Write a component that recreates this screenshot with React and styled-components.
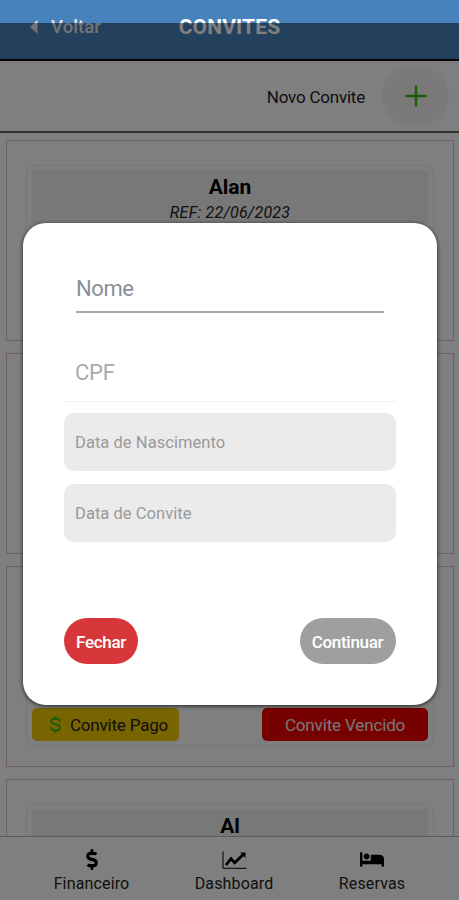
import React from "react";
import styled, { createGlobalStyle } from "styled-components";
import { FaBed, FaDollarSign } from "react-icons/fa";

const GlobalStyle = createGlobalStyle`
  * { box-sizing: border-box; }
  body { margin: 0; overflow: hidden; font-family: Roboto, sans-serif; color: #222; background: #fff; }
  button, input { font: inherit; border: 0; padding: 0; background: none; }
`;

const Screen = styled.div`
  position: relative;
  width: 459px;
  height: 900px;
  overflow: hidden;
  display: flex;
  flex-direction: column;
  background: #fff;
`;

const Header = styled.header`
  flex: none;
  height: 61px;
  padding: 0 29px 6px;
  display: grid;
  grid-template-columns: 1fr auto 1fr;
  align-items: center;
  background: #4682bb;
  border-bottom: 2px solid #000;
  color: #fff;
`;

const BackButton = styled.button`
  display: flex;
  align-items: center;
  gap: 13px;
  color: #e6e6e6;
  font-size: 18.5px;
  font-weight: 500;
  letter-spacing: 0.1px;
  svg { display: block; }
`;

const Title = styled.h1`
  margin: 0;
  font-size: 21px;
  line-height: 24px;
  font-weight: 700;
  letter-spacing: 0.15px;
`;

const Toolbar = styled.div`
  flex: none;
  height: 72px;
  padding-right: 10px;
  display: flex;
  align-items: center;
  justify-content: flex-end;
  gap: 17px;
  border-bottom: 2px solid #626762;
`;

const ToolbarLabel = styled.span`
  padding-top: 1px;
  font-size: 17px;
  letter-spacing: -0.22px;
`;

const AddButton = styled.button`
  width: 67px;
  height: 62px;
  border-radius: 50%;
  display: grid;
  place-items: center;
  background: #f5f5f5;
`;

const List = styled.main`
  flex: 1;
  min-height: 0;
  overflow: hidden;
  padding: 7px 5px 0 6px;
  display: flex;
  flex-direction: column;
  gap: 12px;
`;

const Card = styled.article`
  flex: none;
  height: 201px;
  padding: 24px 19px 20px;
  border: 1px solid #e2bcc4;
`;

const CardBody = styled.div`
  height: 100%;
  padding: 4px 5px;
  display: flex;
  flex-direction: column;
  justify-content: space-between;
  border: 1px solid #ececec;
  border-radius: 8px;
`;

const CardHeading = styled.div`
  height: 54px;
  padding-top: 4px;
  text-align: center;
  background: #f0f0f0;
`;

const GuestName = styled.div`
  font-size: 21px;
  line-height: 26px;
  font-weight: 700;
  color: #000;
`;

const Reference = styled.div`
  font-size: 16px;
  line-height: 25px;
  font-style: italic;
  letter-spacing: 0.2px;
`;

const StatusRow = styled.div`
  display: flex;
  justify-content: space-between;
`;

const Status = styled.span`
  width: ${(p) => (p.$expired ? 166 : 147)}px;
  height: 33px;
  padding-left: ${(p) => (p.$expired ? 0 : 7)}px;
  display: flex;
  align-items: center;
  justify-content: center;
  gap: 9px;
  border-radius: 5px;
  font-size: 17px;
  letter-spacing: ${(p) => (p.$expired ? -0.15 : -0.2)}px;
  background: ${(p) => (p.$expired ? "#ee0000" : "#f0c800")};
  color: ${(p) => (p.$expired ? "#eee" : "#222")};
  svg { color: #18b818; }
`;

const TabBar = styled.nav`
  flex: none;
  height: 64px;
  padding: 0 15px;
  display: grid;
  grid-template-columns: 153px 132px 144px;
  border-top: 1px solid #bbb;
`;

const Tab = styled.div`
  display: flex;
  flex-direction: column;
  align-items: center;
  padding-top: 12px;
  font-size: 16px;
  line-height: 20px;
  letter-spacing: 0.15px;
  gap: 4px;
  svg { color: #000; height: 21px; flex: none; }
`;

const Overlay = styled.div`
  position: absolute;
  inset: 23px 0 0;
  padding: 200px 22.5px 0 23px;
  background: rgba(0, 0, 0, 0.5);
`;

const Dialog = styled.section`
  height: 482px;
  padding: 44px 41px 41px;
  display: flex;
  flex-direction: column;
  border-radius: 23px;
  background: #fff;
  box-shadow: 0 1px 4px rgba(0, 0, 0, 0.75);
`;

const Field = styled.input`
  display: block;
  height: ${(p) => (p.$compact ? 60 : 46)}px;
  margin: ${(p) => (p.$compact ? "29px 0 0" : "0 12px")};
  padding: ${(p) => (p.$compact ? "2px 0 0 11px" : "0 0 1px")};
  outline: 0;
  border-bottom: ${(p) => (p.$compact ? "1px solid #f1f1f1" : "2px solid #aaa")};
  font-size: 22px;
  letter-spacing: ${(p) => (p.$compact ? -0.2 : -0.4)}px;
  &::placeholder { color: ${(p) => (p.$compact ? "#aaa" : "#899096")}; opacity: 1; }
`;

const DateField = styled.button`
  height: 58px;
  margin-top: ${(p) => (p.$first ? 11 : 13)}px;
  padding: 0 11px;
  flex: none;
  text-align: left;
  border-radius: 10px;
  background: #ebebeb;
  color: #999;
  font-size: 16.5px;
  letter-spacing: 0.05px;
`;

const Actions = styled.div`
  margin-top: auto;
  display: flex;
  justify-content: space-between;
`;

const Action = styled.button`
  width: ${(p) => (p.$primary ? 96 : 74)}px;
  height: 46px;
  padding-top: 2px;
  border-radius: 24px;
  background: ${(p) => (p.$primary ? "#9f9f9f" : "#d7373a")};
  color: #fff;
  font-size: 17px;
  font-weight: 500;
  letter-spacing: -0.3px;
  white-space: nowrap;
`;

const BackIcon = () => (
  <svg width="9" height="14" viewBox="0 0 9 14"><path d="M8.5 0v14L1 7z" fill="currentColor" /></svg>
);

const PlusIcon = () => (
  <svg width="22" height="22" viewBox="0 0 22 22"><path d="M11 .5v21M.5 11h21" stroke="#35bd10" strokeWidth="2.5" /></svg>
);

const DollarIcon = () => (
  <svg width="11" height="17" viewBox="0 0 12 18" fill="none" stroke="currentColor" strokeWidth="1.9">
    <path d="M6 0v3M6 15v3M10.7 5.8C10.5 3.5 8.8 2.5 6 2.5S1.3 3.7 1.3 5.6C1.3 10 10.9 7.7 10.9 12.2c0 2.1-2 3.3-4.9 3.3S1.2 14.3 1 12" />
  </svg>
);

const TrendIcon = () => (
  <svg width="25" height="21" viewBox="0 0 25 21" fill="none" stroke="currentColor">
    <path d="M1 2.5v16.8h23.5" strokeWidth="1" />
    <path d="m4 16 5-6.3 3.7 4.1L21 5.8" strokeWidth="2.8" />
    <path d="M18 3.5h5.5V9z" fill="currentColor" stroke="none" />
  </svg>
);

const invites = [
  { id: 1, name: "Alan", reference: "REF: 22/06/2023" },
  { id: 2 },
  { id: 3, status: true },
  { id: 4, name: "Al" },
];

const InviteCard = ({ name, reference, status }) => (
  <Card>
    <CardBody>
      <CardHeading>
        {name && <GuestName>{name}</GuestName>}
        {reference && <Reference>{reference}</Reference>}
      </CardHeading>
      {status && (
        <StatusRow>
          <Status><DollarIcon />Convite Pago</Status>
          <Status $expired>Convite Vencido</Status>
        </StatusRow>
      )}
    </CardBody>
  </Card>
);

export default function App() {
  return (
    <>
      <GlobalStyle />
      <Screen>
        <Header>
          <BackButton><BackIcon />Voltar</BackButton>
          <Title>CONVITES</Title>
        </Header>
        <Toolbar>
          <ToolbarLabel>Novo Convite</ToolbarLabel>
          <AddButton aria-label="Novo Convite"><PlusIcon /></AddButton>
        </Toolbar>
        <List>
          {invites.map((invite) => <InviteCard key={invite.id} {...invite} />)}
        </List>
        <TabBar>
          <Tab><FaDollarSign size={20} />Financeiro</Tab>
          <Tab><TrendIcon />Dashboard</Tab>
          <Tab><FaBed size={24} />Reservas</Tab>
        </TabBar>
        <Overlay>
          <Dialog role="dialog">
            <Field placeholder="Nome" />
            <Field $compact placeholder="CPF" />
            <DateField $first>Data de Nascimento</DateField>
            <DateField>Data de Convite</DateField>
            <Actions>
              <Action>Fechar</Action>
              <Action $primary>Continuar</Action>
            </Actions>
          </Dialog>
        </Overlay>
      </Screen>
    </>
  );
}
